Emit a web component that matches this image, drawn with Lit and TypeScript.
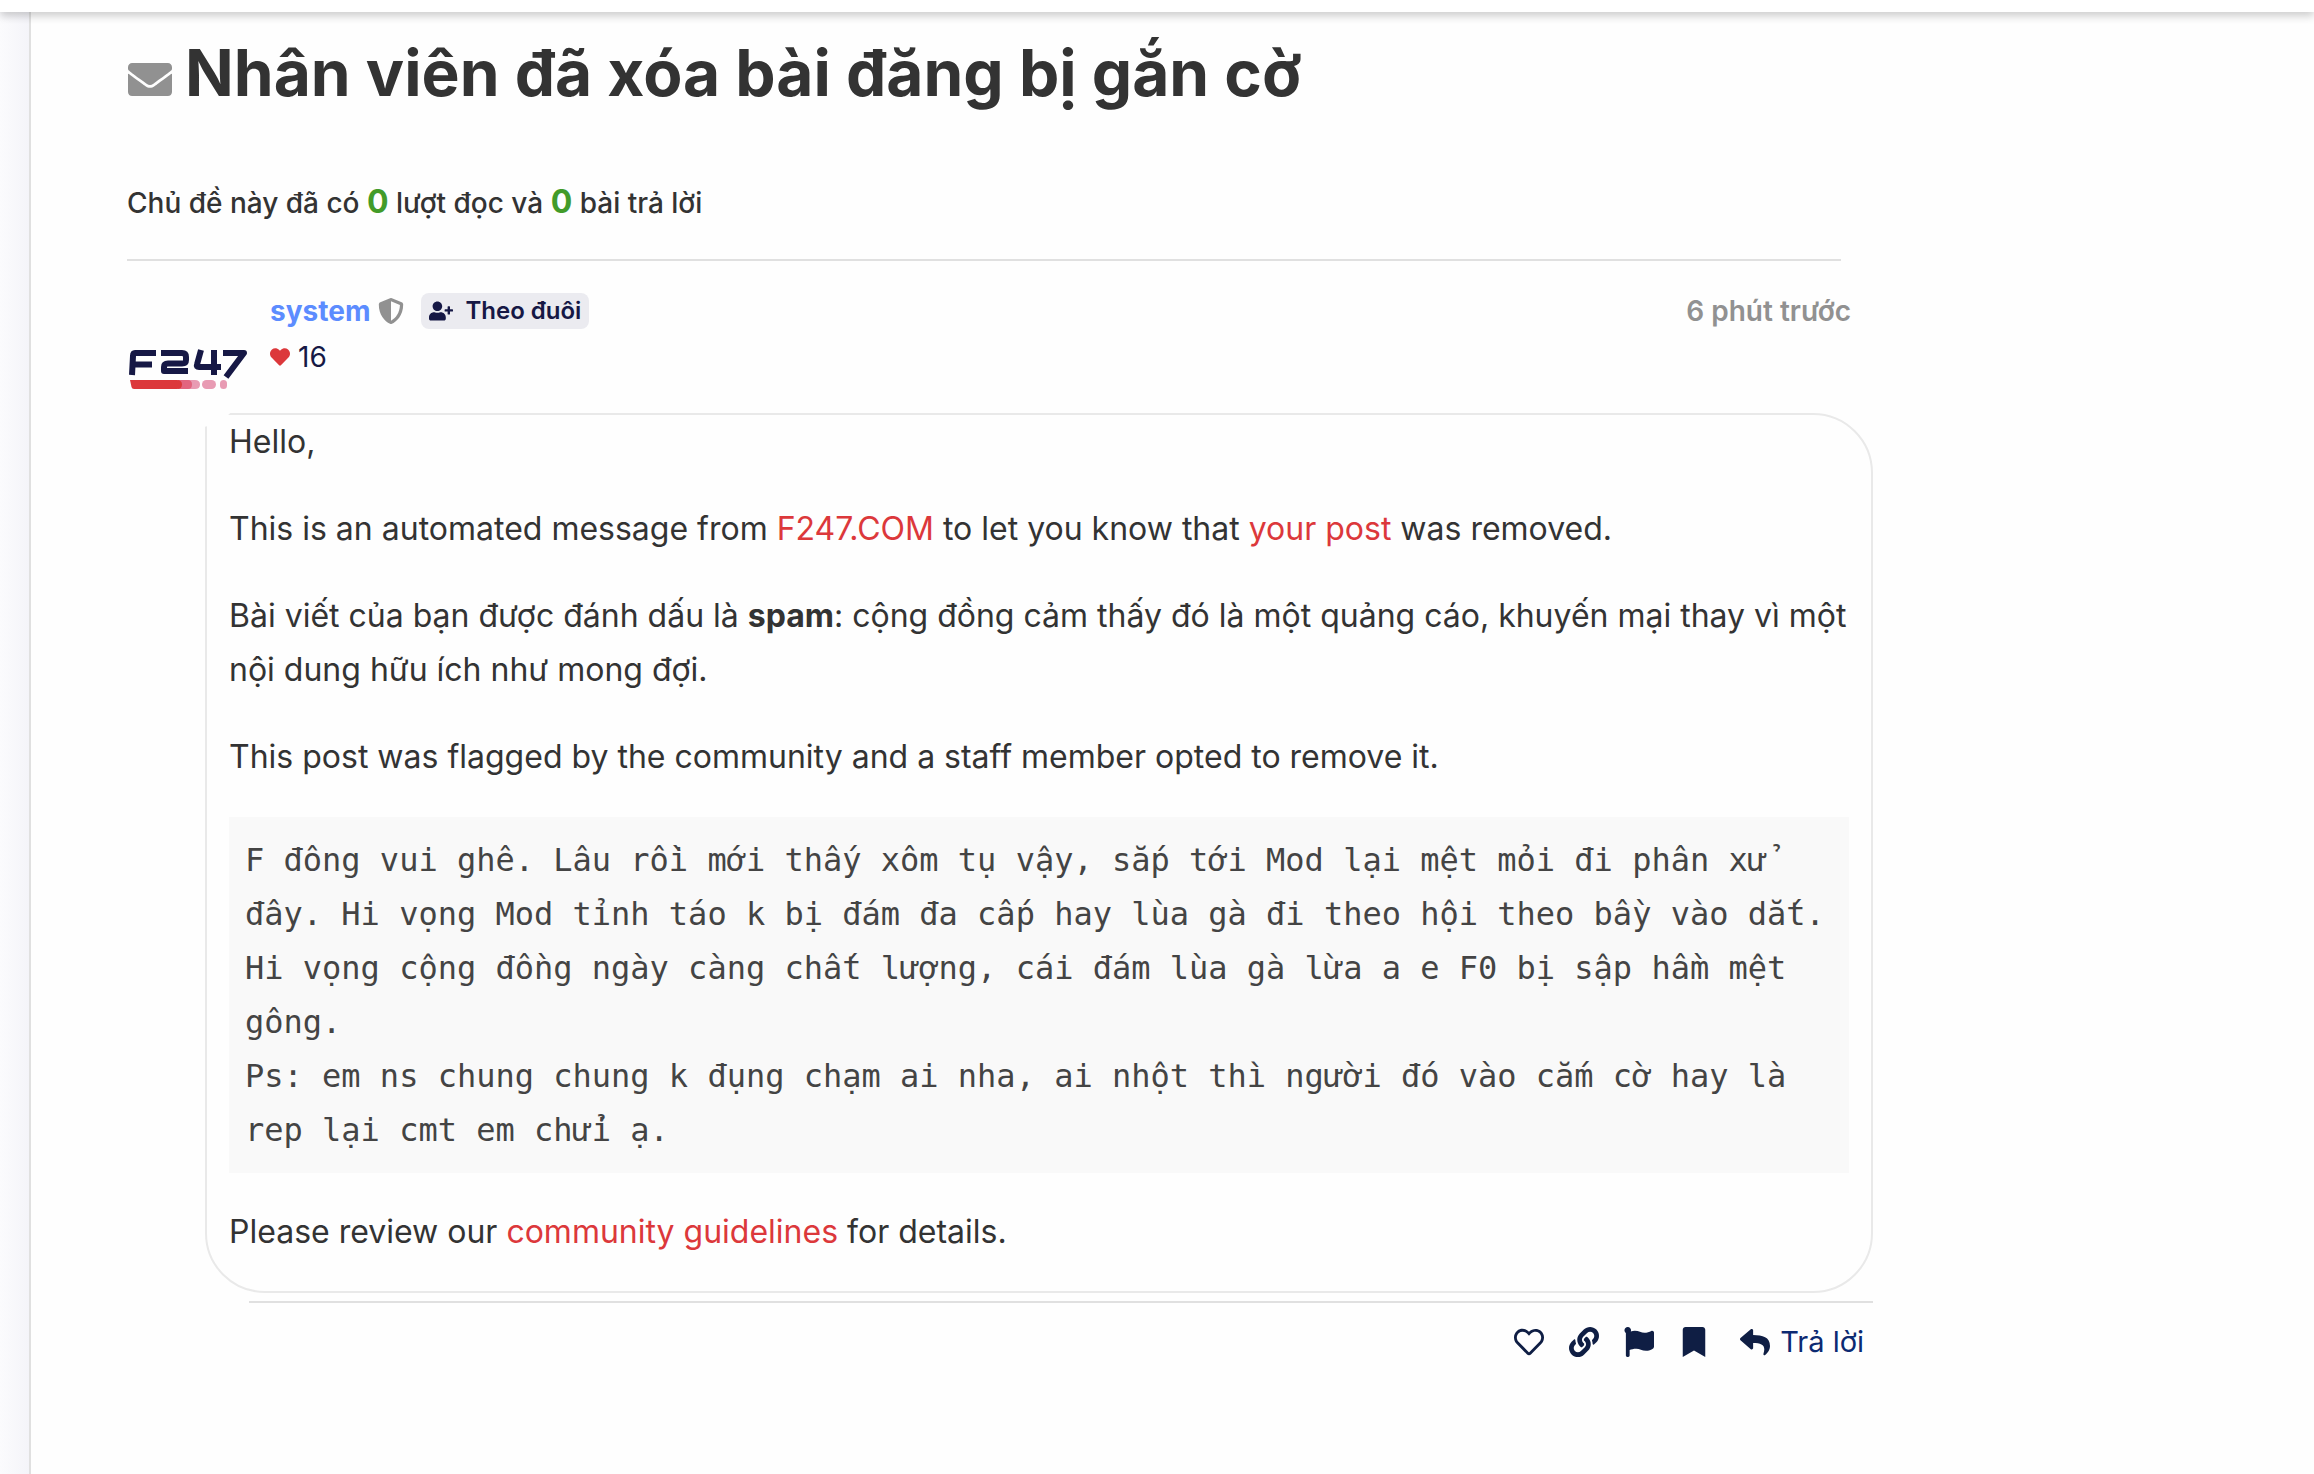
import { LitElement, html, css, svg } from "lit";
import { customElement, property } from "lit/decorators.js";

/** Glyph outlines keyed by name: view box and path data. */
const ICONS: Record<string, [string, string]> = {
  envelope: [
    "0 64 512 384",
    "M502.3 190.8c3.9-3.1 9.7-.2 9.7 4.7V400c0 26.5-21.5 48-48 48H48c-26.5 0-48-21.5-48-48V195.6c0-5 5.7-7.8 9.7-4.7 22.4 17.4 52.1 39.5 154.1 113.6 21.1 15.4 56.7 47.8 92.2 47.6 35.7.3 72-32.8 92.3-47.6 102-74.1 131.6-96.3 154-113.7zM256 320c23.2.4 56.6-29.2 73.4-41.4 132.7-96.3 142.8-104.7 173.4-128.7 5.8-4.5 9.2-11.5 9.2-18.9v-19c0-26.5-21.5-48-48-48H48c-26.5 0-48 21.5-48 48v19c0 7.4 3.4 14.3 9.2 18.9 30.6 23.9 40.7 32.4 173.4 128.7 16.8 12.2 50.2 41.8 73.4 41.4z",
  ],
  shield: [
    "0 0 512 512",
    "M466.5 83.7l-192-80a48.15 48.15 0 0 0-36.9 0l-192 80C27.7 91.1 16 108.6 16 128c0 198.5 114.5 335.7 221.5 380.3 11.8 4.9 25.1 4.9 36.9 0C360.1 472.6 496 349.3 496 128c0-19.4-11.7-36.9-29.5-44.3zM256.1 446.3l-.1-381 175.9 73.3c-3.3 151.4-82.1 261.1-175.8 307.7z",
  ],
  userPlus: [
    "0 0 640 512",
    "M624 208h-64v-64c0-8.8-7.2-16-16-16h-32c-8.8 0-16 7.2-16 16v64h-64c-8.8 0-16 7.2-16 16v32c0 8.8 7.2 16 16 16h64v64c0 8.8 7.2 16 16 16h32c8.8 0 16-7.2 16-16v-64h64c8.8 0 16-7.2 16-16v-32c0-8.8-7.2-16-16-16zm-400 48c70.7 0 128-57.3 128-128S294.7 0 224 0 96 57.3 96 128s57.3 128 128 128zm89.6 32h-16.7c-22.2 10.2-46.9 16-72.9 16s-50.6-5.8-72.9-16h-16.7C60.2 288 0 348.2 0 422.4V464c0 26.5 21.5 48 48 48h352c26.5 0 48-21.5 48-48v-41.6c0-74.2-60.2-134.4-134.4-134.4z",
  ],
  heart: [
    "0 0 512 512",
    "M462.3 62.6C407.5 15.9 326 24.3 275.7 76.2L256 96.5l-19.7-20.3C186.1 24.3 104.5 15.9 49.7 62.6c-62.8 53.6-66.1 149.8-9.9 207.9l193.5 199.8c12.5 12.9 32.8 12.9 45.3 0l193.5-199.8c56.3-58.1 53-154.3-9.8-207.9z",
  ],
  heartOutline: [
    "0 0 512 512",
    "M458.4 64.3C400.6 15.7 311.3 23 256 79.3 200.7 23 111.4 15.6 53.6 64.3-21.6 127.6-10.6 230.8 43 285.5l175.4 178.7c10 10.2 23.4 15.9 37.6 15.9 14.3 0 27.6-5.6 37.6-15.8L469 285.6c53.5-54.7 64.7-157.9-10.6-221.3zm-23.6 187.5L259.4 430.5c-2.4 2.4-4.4 2.4-6.8 0L77.2 251.8c-36.5-37.2-43.9-107.6 7.3-150.7 38.9-32.7 98.9-27.8 136.5 10.5l35 35.7 35-35.7c37.8-38.5 97.8-43.2 136.5-10.6 51.1 43.1 43.5 113.9 7.3 150.8z",
  ],
  link: [
    "0 0 512 512",
    "M326.612 185.391c59.747 59.809 58.927 155.698.36 214.59-.11.12-.24.25-.36.37l-67.2 67.2c-59.27 59.27-155.699 59.262-214.96 0-59.27-59.26-59.27-155.7 0-214.96l37.106-37.106c9.84-9.84 26.786-3.3 27.294 10.606.648 17.722 3.826 35.527 9.69 52.721 1.986 5.822.567 12.262-3.783 16.612l-13.087 13.087c-28.026 28.026-28.905 73.66-1.155 101.96 28.024 28.579 74.086 28.749 102.325.51l67.2-67.19c28.191-28.191 28.073-73.757 0-101.83-3.701-3.694-7.429-6.564-10.341-8.569a16.037 16.037 0 0 1-6.947-12.606c-.396-10.567 3.348-21.456 11.698-29.806l21.054-21.055c5.521-5.521 14.182-6.199 20.584-1.731a152.482 152.482 0 0 1 20.522 17.197zM467.547 44.449c-59.261-59.262-155.69-59.27-214.96 0l-67.2 67.2c-.12.12-.25.25-.36.37-58.566 58.892-59.387 154.781.36 214.59a152.454 152.454 0 0 0 20.521 17.196c6.402 4.468 15.064 3.789 20.584-1.731l21.054-21.055c8.35-8.35 12.094-19.239 11.698-29.806a16.037 16.037 0 0 0-6.947-12.606c-2.912-2.005-6.64-4.875-10.341-8.569-28.073-28.073-28.191-73.639 0-101.83l67.2-67.19c28.239-28.239 74.3-28.069 102.325.51 27.75 28.3 26.872 73.934-1.155 101.96l-13.087 13.087c-4.35 4.35-5.769 10.79-3.783 16.612 5.864 17.194 9.042 34.999 9.69 52.721.509 13.906 17.454 20.446 27.294 10.606l37.106-37.106c59.271-59.259 59.271-155.699.001-214.959z",
  ],
  flag: [
    "0 0 512 512",
    "M349.565 98.783C295.978 98.783 251.721 64 184.348 64c-24.955 0-47.309 4.384-68.045 12.013a55.947 55.947 0 0 0 3.586-23.562C118.117 24.015 94.806 1.206 66.338.048 34.345-1.254 8 24.296 8 56c0 19.026 9.497 35.825 24 45.945V488c0 13.255 10.745 24 24 24h16c13.255 0 24-10.745 24-24v-94.4c28.311-12.064 63.582-22.122 114.435-22.122 53.588 0 97.844 34.783 165.217 34.783 48.169 0 86.667-16.294 122.505-40.858C506.84 359.452 512 349.571 512 339.045v-243.1c0-23.393-24.269-38.87-45.485-29.016-34.338 15.948-76.454 31.854-116.95 31.854z",
  ],
  bookmark: [
    "0 0 384 512",
    "M0 512V48C0 21.49 21.49 0 48 0h288c26.51 0 48 21.49 48 48v464L192 400 0 512z",
  ],
  reply: [
    "0 0 512 512",
    "M8.309 189.836L184.313 37.851C199.719 24.546 224 35.347 224 56.015v80.053c160.629 1.839 288 34.032 288 186.258 0 61.441-39.581 122.309-83.333 154.132-13.653 9.931-33.111-2.533-28.077-18.631 45.344-145.012-21.507-183.51-176.59-185.742V360c0 20.7-24.3 31.453-39.687 18.164l-176.004-152c-11.071-9.562-11.086-26.753 0-36.328z",
  ],
};

@customElement("ui-icon")
export class UiIcon extends LitElement {
  static styles = css`
    :host {
      display: inline-flex;
      flex: none;
    }
    svg {
      display: block;
      width: 100%;
      height: 100%;
      fill: currentColor;
    }
  `;

  @property() name = "";

  render() {
    const [box, d] = ICONS[this.name];
    return html`<svg viewBox=${box} aria-hidden="true">${svg`<path d=${d}></path>`}</svg>`;
  }
}

@customElement("brand-avatar")
export class BrandAvatar extends LitElement {
  static styles = css`
    :host {
      display: block;
    }
    svg {
      display: block;
      width: 100%;
    }
    .mark {
      fill: none;
      stroke: #161845;
      stroke-width: 6;
      stroke-linejoin: round;
    }
  `;

  render() {
    return html`<svg viewBox="0 0 120 42" role="img" aria-label="F247">
      <g class="mark">
        <path d="M28 5H7Q5 5 5 8L4 27M5 16.500H24"></path>
        <path d="M33 5H54Q58 5 58 9V12Q58 15.500 54 15.500H40Q36 15.500 36 19V23H60"></path>
        <path d="M73 2L69 16.500Q68 19 71 19H93M86 2V27"></path>
        <path d="M95 5H116L98 29"></path>
      </g>
      <path d="M50 32H67Q72 32 72 36.500T67 41H50Z" fill="#e89bb3"></path>
      <path d="M50 32H60Q64 32 64 36.500T60 41H50Z" fill="#e2647f"></path>
      <path d="M2 32H49Q54 32 54 36.500T49 41H6Q4 41 3.500 39Z" fill="#dc383b"></path>
      <rect x="74" y="32" width="14" height="9" rx="4.500" fill="#e89bb3"></rect>
      <rect x="92" y="32" width="7" height="9" rx="3.500" fill="#e89bb3"></rect>
    </svg>`;
  }
}

const QUOTE = [
  "F đông vui ghê. Lâu rồi mới thấy xôm tụ vậy, sắp tới Mod lại mệt mỏi đi phân xử đây. Hi vọng Mod tỉnh táo k bị đám đa cấp hay lùa gà đi theo hội theo bầy vào dắt. Hi vọng cộng đồng ngày càng chất lượng, cái đám lùa gà lừa a e F0 bị sập hầm mệt gông.",
  "Ps: em ns chung chung k đụng chạm ai nha, ai nhột thì người đó vào cắm cờ hay là rep lại cmt em chửi ạ.",
].join("\n");

const ACTIONS = [
  { icon: "heartOutline", label: "Thích" },
  { icon: "link", label: "Liên kết" },
  { icon: "flag", label: "Gắn cờ" },
  { icon: "bookmark", label: "Dấu trang" },
];

@customElement("app-root")
export class AppRoot extends LitElement {
  static styles = css`
    :host {
      display: flex;
      flex-direction: column;
      min-height: 100vh;
      background: #fefefe;
      color: #333;
      font: 400 32px/54px Inter, "Liberation Sans", sans-serif;
    }
    * {
      box-sizing: border-box;
    }
    a {
      color: #dc383b;
      text-decoration: none;
    }
    button {
      padding: 0;
      border: 0;
      background: none;
      color: inherit;
      font: inherit;
      cursor: pointer;
    }
    .topbar {
      position: relative;
      z-index: 2;
      flex: none;
      height: 12px;
      background: #fff;
      box-shadow: 0 4px 8px rgba(0, 0, 0, 0.2);
    }
    .page {
      flex: 1;
      display: grid;
      grid-template-columns: 31px minmax(0, 1fr);
    }
    .sidebar {
      border-right: 2px solid #e0e0e0;
      background: linear-gradient(to right, #fbfbfd, #f4f4f9);
    }
    .topic {
      max-width: 1842px;
      padding: 22px 0 80px 96px;
    }
    .title {
      display: flex;
      align-items: center;
      gap: 13px;
      margin: 0;
      padding-left: 1px;
      font-size: 64px;
      line-height: 78px;
      font-weight: 700;
    }
    .title ui-icon {
      width: 44px;
      height: 33px;
      margin-top: 12px;
      color: #919191;
    }
    .stats {
      margin: 63px 32px 0 0;
      padding-bottom: 28px;
      border-bottom: 2px solid #e0e0e0;
      font-size: 28px;
      line-height: 56px;
      font-weight: 500;
    }
    .stats b {
      color: #429b29;
      font-size: 32px;
      line-height: 32px;
      font-weight: 700;
    }
    .post-head {
      display: grid;
      grid-template-columns: 124px minmax(0, 1fr);
      column-gap: 19px;
      padding: 32px 22px 0 0;
      margin-bottom: -2px;
    }
    .avatar {
      position: relative;
      z-index: 1;
      display: flex;
      align-items: center;
      height: 124px;
      margin: 12px 0 -14px;
      padding-left: 1px;
      border-radius: 50%;
      background: #fefefe;
    }
    .avatar brand-avatar {
      width: 120px;
      padding-top: 4px;
    }
    .names {
      display: flex;
      align-items: center;
      height: 36px;
      font-size: 28px;
      font-weight: 700;
    }
    .names .user {
      color: #5c8cff;
    }
    .names .shield {
      width: 26px;
      height: 26px;
      margin: 0 17px 0 8px;
      color: #919191;
    }
    .follow {
      display: flex;
      align-items: center;
      gap: 12px;
      height: 36px;
      padding: 0 8px;
      border-radius: 8px;
      background: #ebebf0;
      color: #161845;
      font-size: 24px;
      font-weight: 600;
    }
    .follow ui-icon {
      width: 24px;
      height: 20px;
    }
    .age {
      margin-left: auto;
      color: #919191;
      font-weight: 600;
    }
    .likes {
      display: flex;
      align-items: center;
      gap: 8px;
      height: 56px;
      color: #161845;
      font-size: 28px;
    }
    .likes ui-icon {
      width: 20px;
      height: 20px;
      color: #dc383b;
    }
    .cooked {
      margin-left: 78px;
      padding: 0 22px 32px;
      border: 2px solid #e9e9e9;
      border-radius: 0 60px 60px 60px;
    }
    .cooked p {
      margin: 0 0 33px;
    }
    .cooked p:last-child {
      margin-bottom: 0;
    }
    .cooked pre {
      margin: 0 0 32px;
      padding: 16px;
      background: #f9f9f9;
      color: #444;
      font-family: "DejaVu Sans Mono", monospace;
      white-space: pre-wrap;
    }
    .actions {
      display: flex;
      justify-content: flex-end;
      align-items: center;
      gap: 25px;
      margin: 8px 0 0 122px;
      padding: 12px 9px 0 0;
      border-top: 2px solid #e0e0e0;
      color: #0f1e44;
    }
    .actions button {
      display: flex;
      align-items: center;
      gap: 10px;
      height: 54px;
    }
    .actions ui-icon {
      width: 30px;
      height: 30px;
    }
    .actions .reply {
      color: #0c2a72;
      font-size: 29px;
      margin-left: 6px;
    }
    .actions .reply ui-icon {
      color: #0f1e44;
    }
  `;

  render() {
    return html`
      <header class="topbar"></header>
      <div class="page">
        <aside class="sidebar"></aside>
        <main class="topic">
          <h1 class="title"><ui-icon name="envelope"></ui-icon>Nhân viên đã xóa bài đăng bị gắn cờ</h1>
          <p class="stats">Chủ đề này đã có <b>0</b> lượt đọc và <b>0</b> bài trả lời</p>
          <article>
            <div class="post-head">
              <div class="avatar"><brand-avatar></brand-avatar></div>
              <div>
                <div class="names">
                  <a class="user" href="#system">system</a>
                  <ui-icon class="shield" name="shield"></ui-icon>
                  <button class="follow" type="button"><ui-icon name="userPlus"></ui-icon>Theo đuôi</button>
                  <span class="age">6 phút trước</span>
                </div>
                <div class="likes"><ui-icon name="heart"></ui-icon>16</div>
              </div>
            </div>
            <div class="cooked">
              <p>Hello,</p>
              <p>This is an automated message from <a href="#home">F247.COM</a> to let you know that <a href="#post">your post</a> was removed.</p>
              <p>Bài viết của bạn được đánh dấu là <strong>spam</strong>: cộng đồng cảm thấy đó là một quảng cáo, khuyến mại thay vì một nội dung hữu ích như mong đợi.</p>
              <p>This post was flagged by the community and a staff member opted to remove it.</p>
              <pre>${QUOTE}</pre>
              <p>Please review our <a href="#guidelines">community guidelines</a> for details.</p>
            </div>
            <div class="actions">
              ${ACTIONS.map(
                (a) => html`<button type="button" aria-label=${a.label}><ui-icon name=${a.icon}></ui-icon></button>`
              )}
              <button class="reply" type="button"><ui-icon name="reply"></ui-icon>Trả lời</button>
            </div>
          </article>
        </main>
      </div>
    `;
  }
}
